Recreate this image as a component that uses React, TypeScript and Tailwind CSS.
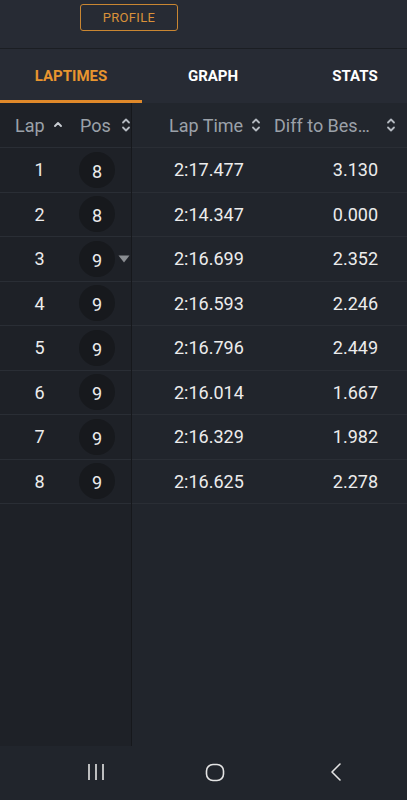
import React from "react";

const laps = [
  { lap: 1, pos: 8, time: "2:17.477", diff: "3.130" },
  { lap: 2, pos: 8, time: "2:14.347", diff: "0.000" },
  { lap: 3, pos: 9, time: "2:16.699", diff: "2.352", drop: true },
  { lap: 4, pos: 9, time: "2:16.593", diff: "2.246" },
  { lap: 5, pos: 9, time: "2:16.796", diff: "2.449" },
  { lap: 6, pos: 9, time: "2:16.014", diff: "1.667" },
  { lap: 7, pos: 9, time: "2:16.329", diff: "1.982" },
  { lap: 8, pos: 9, time: "2:16.625", diff: "2.278" },
];

function SortBoth() {
  return (
    <svg width="10" height="16" viewBox="0 0 10 16" fill="none" stroke="#b5bac1" strokeWidth="1.8" strokeLinecap="round" strokeLinejoin="round">
      <path d="M2 5.5 L5 2.5 L8 5.5" />
      <path d="M2 10.5 L5 13.5 L8 10.5" />
    </svg>
  );
}

function SortUp() {
  return (
    <svg width="10" height="16" viewBox="0 0 10 16" fill="none" stroke="#c8ccd2" strokeWidth="1.9" strokeLinecap="round" strokeLinejoin="round">
      <path d="M2 9 L5 6 L8 9" />
    </svg>
  );
}

export default function App() {
  return (
    <div className="w-[407px] h-[800px] bg-[#21252c] flex flex-col overflow-hidden" style={{ fontFamily: "Roboto, 'Noto Sans', sans-serif" }}>
      {/* top bar */}
      <div className="h-[49px] shrink-0 bg-[#272b34] border-b border-[#1b1e23] pl-[80px] pt-[4px]">
        <button className="w-[98px] h-[27px] rounded-[3px] border border-[#c98632] text-[#d9913a] text-[13px] tracking-wide">
          PROFILE
        </button>
      </div>

      {/* tabs */}
      <div className="h-[54px] shrink-0 bg-[#272b34] flex overflow-hidden">
        <div className="w-[142px] shrink-0 flex items-center justify-center border-b-[3px] border-[#e0892a] text-[#e8952f] text-[15px] font-bold pt-[3px]">
          LAPTIMES
        </div>
        <div className="w-[142px] shrink-0 flex items-center justify-center text-white text-[15px] font-bold">
          GRAPH
        </div>
        <div className="w-[142px] shrink-0 flex items-center justify-center text-white text-[15px] font-bold">
          STATS
        </div>
      </div>

      {/* table */}
      <div className="flex-1 flex">
        {/* frozen columns */}
        <div className="w-[132px] shrink-0 bg-[#1e2127] border-r border-[#16181c] flex flex-col">
          <div className="h-[45px] flex items-center text-[#9ba1a9] text-[18px] border-b border-[#2a2e35]">
            <div className="w-[79px] flex items-center pl-[15px] gap-[8px]">
              <span>Lap</span>
              <SortUp />
            </div>
            <div className="flex items-center gap-[10px] pl-[1px]">
              <span>Pos</span>
              <SortBoth />
            </div>
          </div>
          {laps.map((r) => (
            <div key={r.lap} className="h-[44.5px] flex items-center border-b border-[#2a2e35] text-[#ececec] text-[18px]">
              <div className="w-[79px] text-center">{r.lap}</div>
              <div className="w-[36px] h-[36px] rounded-full bg-[#17191d] flex items-center justify-center pt-[3px]">
                {r.pos}
              </div>
              {r.drop && (
                <svg className="ml-[3px]" width="12" height="8" viewBox="0 0 12 8">
                  <path d="M0.5 0.5 H11.5 L6 7.5 Z" fill="#8a8d92" />
                </svg>
              )}
            </div>
          ))}
        </div>

        {/* scrolling columns */}
        <div className="flex-1 flex flex-col">
          <div className="h-[45px] flex items-center text-[#9ba1a9] text-[18px] border-b border-[#2a2e35] bg-[#22262d]">
            <div className="w-[142px] flex items-center pl-[37px] gap-[8px]">
              <span>Lap Time</span>
              <SortBoth />
            </div>
            <div className="flex-1 flex items-center">
              <span>Diff to Bes…</span>
              <span className="ml-auto mr-[11px]">
                <SortBoth />
              </span>
            </div>
          </div>
          {laps.map((r) => (
            <div key={r.lap} className="h-[44.5px] flex items-center border-b border-[#2a2e35] text-[#ececec] text-[18px]">
              <div className="w-[142px] pl-[42px]">{r.time}</div>
              <div className="flex-1 text-right pr-[29px]">{r.diff}</div>
            </div>
          ))}
        </div>
      </div>

      {/* bottom nav */}
      <div className="h-[54px] shrink-0 bg-[#21252c] flex items-center pb-[2px]">
        <svg className="ml-[87px]" width="18" height="18" viewBox="0 0 18 18" fill="none" stroke="#e4e4e4" strokeWidth="1.6">
          <path d="M2 1 V17 M9 1 V17 M16 1 V17" />
        </svg>
        <svg className="ml-[100px]" width="20" height="19" viewBox="0 0 20 19" fill="none" stroke="#e4e4e4" strokeWidth="1.6">
          <rect x="1.5" y="1.5" width="17" height="16" rx="6.5" />
        </svg>
        <svg className="ml-[104px]" width="14" height="20" viewBox="0 0 14 20" fill="none" stroke="#e4e4e4" strokeWidth="1.6" strokeLinecap="round" strokeLinejoin="round">
          <path d="M11 2 L3 10 L11 18" />
        </svg>
      </div>
    </div>
  );
}
